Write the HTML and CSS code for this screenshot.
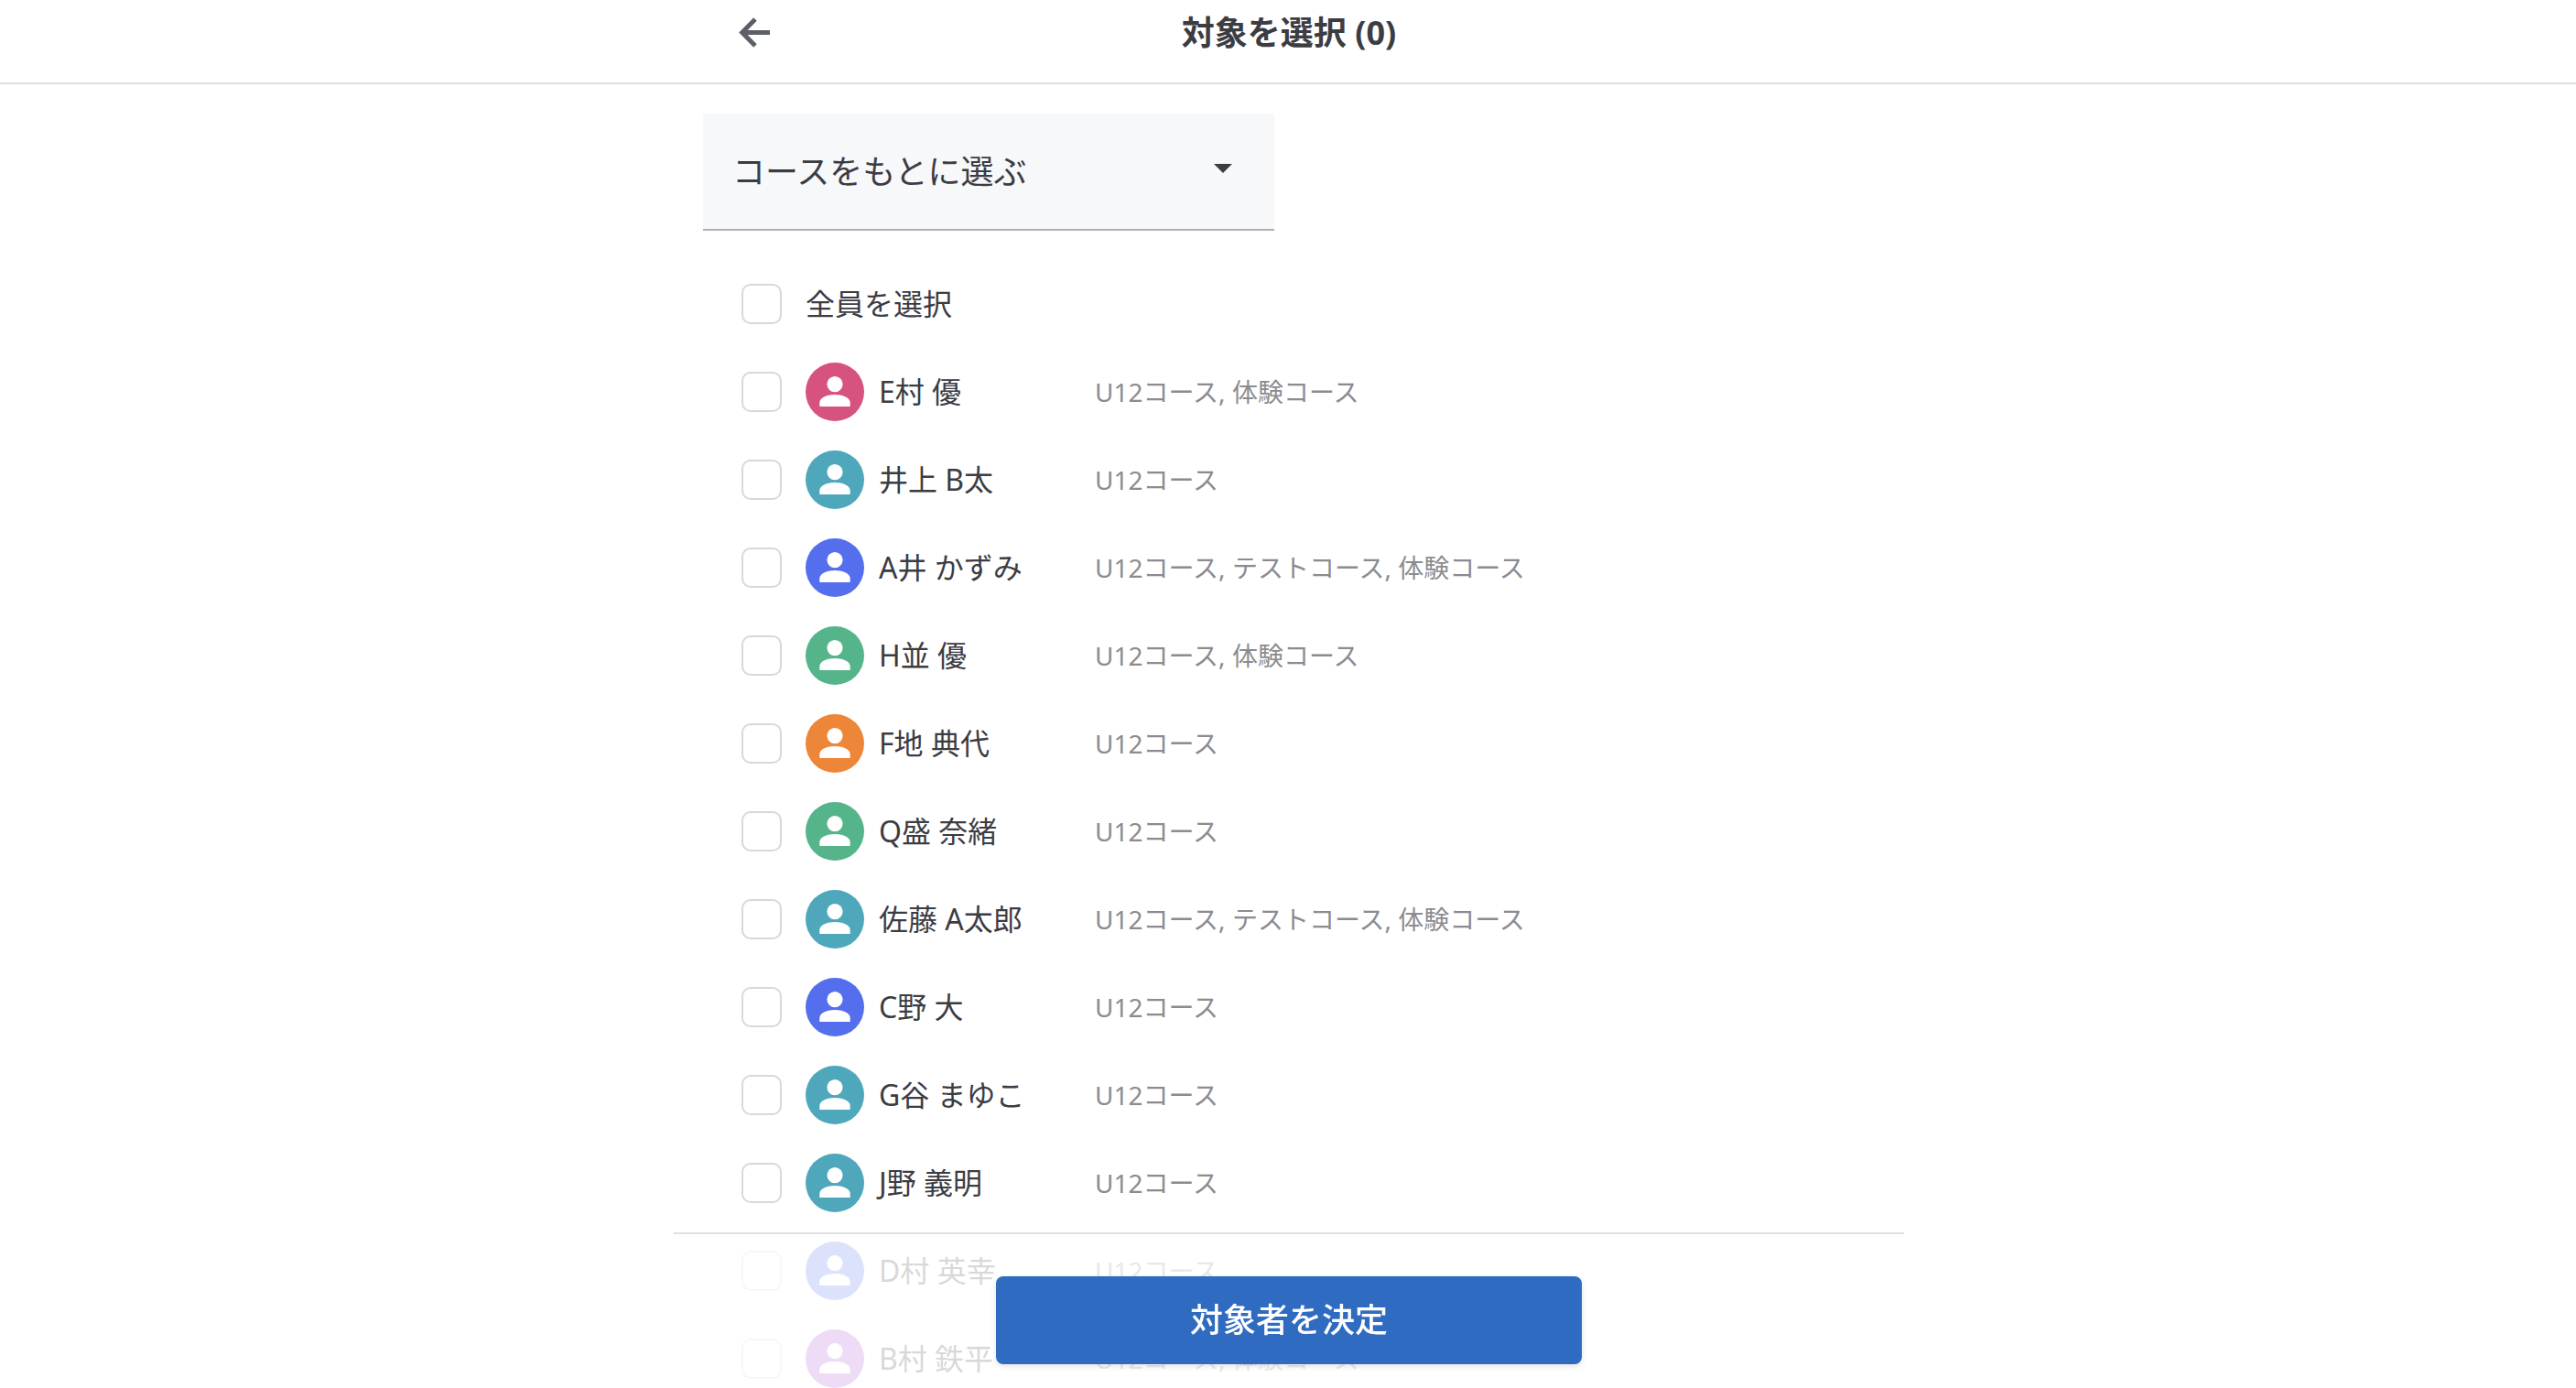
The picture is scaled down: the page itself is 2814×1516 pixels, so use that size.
FILE: index.html
```html
<!DOCTYPE html>
<html lang="ja">
<head>
<meta charset="utf-8">
<meta name="viewport" content="width=device-width, initial-scale=1">
<title>対象を選択</title>
<link rel="stylesheet" href="styles.css">
</head>
<body>
<svg class="sprite" aria-hidden="true">
  <symbol id="person" viewBox="0 0 64 64">
    <circle cx="32" cy="23.6" r="8.6"/>
    <path d="M15.3 48v-4.2c0-5.8 8.8-8.9 16.7-8.900s16.700 3.100 16.700 8.900V48z"/>
  </symbol>
</svg>

<header class="header">
  <div class="header-inner">
    <button class="back" type="button" aria-label="戻る">
      <svg viewBox="0 0 48 48"><path d="M41 23.500H11M25 9L10.700 23.500L25 38"/></svg>
    </button>
    <h1 class="title">対象を選択 (0)</h1>
  </div>
</header>

<main class="main">
  <div class="content">
    <div class="filter">
      <select class="filter-select" aria-label="選び方">
        <option>コースをもとに選ぶ</option>
      </select>
      <svg class="filter-caret" viewBox="0 0 20 10" aria-hidden="true"><path d="M0 0h20L10 10z"/></svg>
    </div>

    <ul class="list">
      <li><label class="row"><input class="check" type="checkbox"><span>全員を選択</span></label></li>
      <li><label class="row"><input class="check" type="checkbox"><svg class="avatar pink"><use href="#person"/></svg><span class="name">E村 優</span><span class="courses">U12コース, 体験コース</span></label></li>
      <li><label class="row"><input class="check" type="checkbox"><svg class="avatar teal"><use href="#person"/></svg><span class="name">井上 B太</span><span class="courses">U12コース</span></label></li>
      <li><label class="row"><input class="check" type="checkbox"><svg class="avatar blue"><use href="#person"/></svg><span class="name">A井 かずみ</span><span class="courses">U12コース, テストコース, 体験コース</span></label></li>
      <li><label class="row"><input class="check" type="checkbox"><svg class="avatar green"><use href="#person"/></svg><span class="name">H並 優</span><span class="courses">U12コース, 体験コース</span></label></li>
      <li><label class="row"><input class="check" type="checkbox"><svg class="avatar orange"><use href="#person"/></svg><span class="name">F地 典代</span><span class="courses">U12コース</span></label></li>
      <li><label class="row"><input class="check" type="checkbox"><svg class="avatar green"><use href="#person"/></svg><span class="name">Q盛 奈緒</span><span class="courses">U12コース</span></label></li>
      <li><label class="row"><input class="check" type="checkbox"><svg class="avatar teal"><use href="#person"/></svg><span class="name">佐藤 A太郎</span><span class="courses">U12コース, テストコース, 体験コース</span></label></li>
      <li><label class="row"><input class="check" type="checkbox"><svg class="avatar blue"><use href="#person"/></svg><span class="name">C野 大</span><span class="courses">U12コース</span></label></li>
      <li><label class="row"><input class="check" type="checkbox"><svg class="avatar teal"><use href="#person"/></svg><span class="name">G谷 まゆこ</span><span class="courses">U12コース</span></label></li>
      <li><label class="row"><input class="check" type="checkbox"><svg class="avatar teal"><use href="#person"/></svg><span class="name">J野 義明</span><span class="courses">U12コース</span></label></li>
      <li><label class="row"><input class="check" type="checkbox"><svg class="avatar blue"><use href="#person"/></svg><span class="name">D村 英幸</span><span class="courses">U12コース</span></label></li>
      <li><label class="row"><input class="check" type="checkbox"><svg class="avatar purple"><use href="#person"/></svg><span class="name">B村 鉄平</span><span class="courses">U12コース, 体験コース</span></label></li>
    </ul>
  </div>
</main>

<footer class="footer">
  <div class="footer-inner">
    <button class="submit" type="button">対象者を決定</button>
  </div>
</footer>
</body>
</html>
```
FILE: styles.css
```css
:root {
  --text: #3c3c43;
  --muted: #8c8c90;
  --line: #dfe0e4;
  --column: 1344px;
}

* {
  box-sizing: border-box;
}

body {
  margin: 0;
  height: 100vh;
  display: flex;
  flex-direction: column;
  background: #fff;
  color: var(--text);
  font-family: "Noto Sans", "Noto Sans CJK JP", sans-serif;
  font-size: 32px;
  line-height: 48px;
}

button,
select {
  font: inherit;
  color: inherit;
  border: 0;
  cursor: pointer;
}

.sprite {
  display: none;
}

/* Header */
.header {
  flex: none;
  padding: 0 0 18px 2px;
  border-bottom: 2px solid var(--line);
}

.header-inner {
  max-width: var(--column);
  margin: 0 auto;
  padding: 0 64px;
  display: grid;
  grid-template-columns: 48px 1fr 48px;
  align-items: center;
  height: 72px;
}

.back {
  width: 48px;
  height: 48px;
  padding: 0;
  background: none;
}

.back svg {
  display: block;
  fill: none;
  stroke: #5d5f67;
  stroke-width: 5;
}

.title {
  margin: 0;
  font-size: 36px;
  font-weight: 700;
  text-align: center;
}

/* Scrolling content */
.main {
  flex: 1;
  min-height: 0;
  overflow-y: auto;
  scrollbar-width: none;
  padding-left: 2px;
}

.content {
  max-width: var(--column);
  margin: 0 auto;
  padding: 32px 32px 0;
}

.filter {
  position: relative;
  max-width: 624px;
}

.filter-select {
  display: block;
  appearance: none;
  width: 100%;
  height: 128px;
  padding: 2px 96px 0 32px;
  border-bottom: 2px solid #adb0b8;
  border-radius: 0;
  background: #f7f8fa;
  font-size: 36px;
}

.filter-caret {
  position: absolute;
  right: 46px;
  top: 55px;
  width: 20px;
  height: 10px;
  fill: var(--text);
  pointer-events: none;
}

.list {
  margin: 32px 0 0;
  padding: 0;
  list-style: none;
}

.row {
  display: flex;
  align-items: center;
  height: 96px;
  padding-left: 42px;
  cursor: pointer;
}

.check {
  appearance: none;
  flex: none;
  width: 44px;
  height: 44px;
  margin: 0 26px 0 0;
  border: 2px solid #d8d8d8;
  border-radius: 10px;
  background: #fff;
}

.check:checked {
  background: #2f6bc0;
}

.avatar {
  flex: none;
  width: 64px;
  height: 64px;
  margin-right: 16px;
  border-radius: 50%;
  fill: #fff;
}

.pink { background: #d6537f; }
.teal { background: #4fa7bb; }
.blue { background: #546eed; }
.green { background: #56b48a; }
.orange { background: #ed8638; }
.purple { background: #aa50d2; }

.name {
  flex: none;
  width: 236px;
}

.courses {
  color: var(--muted);
  font-size: 28px;
}

/* Action bar laid over the end of the list */
.footer {
  position: fixed;
  left: 0;
  right: 0;
  bottom: 0;
  padding-left: 2px;
}

.footer-inner {
  max-width: var(--column);
  margin: 0 auto;
  padding: 46px 32px 26px;
  border-top: 2px solid var(--line);
  background: rgba(255, 255, 255, 0.8);
  display: flex;
  justify-content: center;
}

.submit {
  width: 640px;
  height: 96px;
  border-radius: 8px;
  background: #2f6bc0;
  color: #fff;
  font-size: 36px;
  font-weight: 500;
  box-shadow: 0 2px 6px rgba(0, 0, 0, 0.12);
}
```
